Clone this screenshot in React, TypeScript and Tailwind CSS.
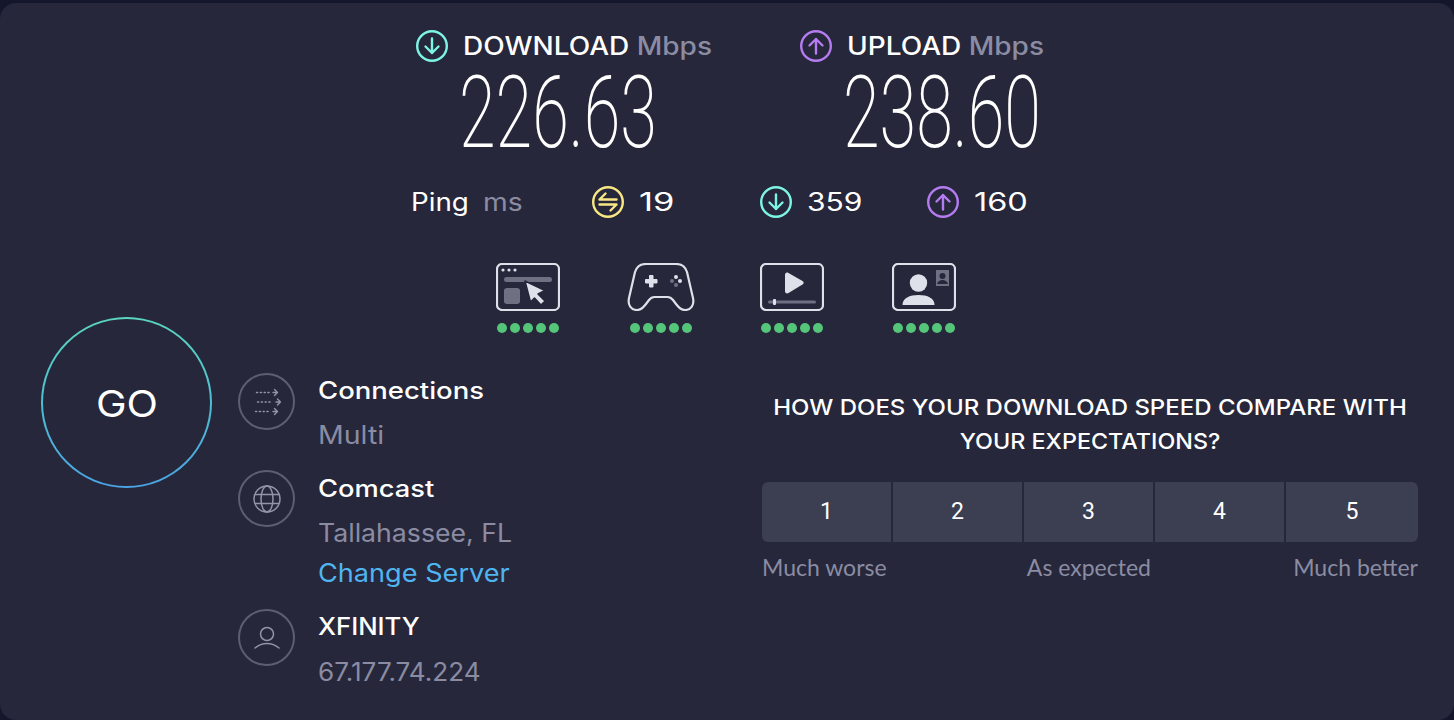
const sans = "font-['Inter','Noto_Sans',sans-serif]";

function ArrowIcon({ dir, color, size = 32 }: { dir: "down" | "up"; color: string; size?: number }) {
  return (
    <svg width={size} height={size} viewBox="0 0 32 32" fill="none" stroke={color} strokeWidth="2.400" strokeLinecap="round" strokeLinejoin="round" className="shrink-0">
      <circle cx="16" cy="16" r="14.800" />
      {dir === "down" ? <path d="M16 8.500v14.500M9.500 16.500l6.500 6.500 6.500-6.500" /> : <path d="M16 23.500V9M9.500 15.500L16 9l6.500 6.500" />}
    </svg>
  );
}

function PingIcon() {
  return (
    <svg width="32" height="32" viewBox="0 0 32 32" fill="none" stroke="#f9e784" strokeWidth="2.400" strokeLinecap="round" strokeLinejoin="round" className="shrink-0">
      <circle cx="16" cy="16" r="14.800" />
      <path d="M7.500 13.500h17M13.500 7.500l-6 6M7.500 18.500h17M18.500 24.500l6-6" />
    </svg>
  );
}

function BrowseIcon() {
  return (
    <svg width="64" height="48" viewBox="0 0 64 48" fill="none">
      <rect x="1" y="1" width="62" height="46" rx="5" stroke="#dfe1ea" strokeWidth="2.200" />
      <circle cx="7" cy="7" r="1.600" fill="#dfe1ea" />
      <circle cx="13" cy="7" r="1.600" fill="#dfe1ea" />
      <circle cx="19" cy="7" r="1.600" fill="#dfe1ea" />
      <rect x="8" y="14" width="48" height="5" rx="2.500" fill="#6f7183" />
      <rect x="8" y="25" width="16" height="16" rx="3" fill="#6f7183" />
      <path d="M29 18l20 9.500-7 3.500 7 7-4 4-6.500-7-4 4z" fill="#dfe1ea" stroke="#26273a" strokeWidth="1.500" strokeLinejoin="round" />
    </svg>
  );
}

function GameIcon() {
  return (
    <svg width="68" height="48" viewBox="0 0 68 48" fill="none">
      <path d="M19 1h30c6 0 9 2 11 8l6 26c1.500 7-2 12-8 12-4 0-6-2-9-6l-3-4c-1.500-2-3-3-5.500-3h-13c-2.500 0-4 1-5.500 3l-3 4c-3 4-5 6-9 6-6 0-9.500-5-8-12L8 9c2-6 5-8 11-8z" stroke="#dfe1ea" strokeWidth="2.200" />
      <path d="M22.500 12.500h3.500v4h4v3.500h-4v4h-3.500v-4h-4v-3.500h4z" fill="#dfe1ea" stroke="#dfe1ea" strokeLinejoin="round" />
      <circle cx="49" cy="14" r="2" fill="#dfe1ea" />
      <circle cx="45" cy="18" r="2" fill="#6f7183" />
      <circle cx="53" cy="18" r="2" fill="#dfe1ea" />
      <circle cx="49" cy="22" r="2" fill="#6f7183" />
    </svg>
  );
}

function VideoIcon() {
  return (
    <svg width="64" height="48" viewBox="0 0 64 48" fill="none">
      <rect x="1" y="1" width="62" height="46" rx="5" stroke="#dfe1ea" strokeWidth="2.200" />
      <path d="M25 12c0-2 1.500-3 3.500-2l14 8c1.500 1 1.500 2.500 0 3.500l-14 8.500c-2 1-3.500 0-3.500-2z" fill="#dfe1ea" />
      <rect x="8" y="37.500" width="48" height="3" rx="1.500" fill="#6f7183" />
      <rect x="13" y="36" width="3" height="6" rx="1" fill="#dfe1ea" />
    </svg>
  );
}

function CallIcon() {
  return (
    <svg width="64" height="48" viewBox="0 0 64 48" fill="none">
      <rect x="1" y="1" width="62" height="46" rx="5" stroke="#dfe1ea" strokeWidth="2.200" />
      <circle cx="26.500" cy="20" r="8.700" fill="#dfe1ea" />
      <path d="M10.500 42c0-7 7-10 16-10s16 3 16 10z" fill="#dfe1ea" />
      <rect x="44" y="7" width="13" height="16" fill="#6f7183" />
      <circle cx="50.500" cy="13" r="3" fill="#26273a" />
      <path d="M45 21c1-3 3-4 5.500-4s4.500 1 5.500 4z" fill="#26273a" />
    </svg>
  );
}

function Dots() {
  return (
    <div className="flex gap-[3px] mt-[12px] justify-center">
      <span className="w-[10px] h-[10px] rounded-full bg-[#55c57a]" />
      <span className="w-[10px] h-[10px] rounded-full bg-[#55c57a]" />
      <span className="w-[10px] h-[10px] rounded-full bg-[#55c57a]" />
      <span className="w-[10px] h-[10px] rounded-full bg-[#55c57a]" />
      <span className="w-[10px] h-[10px] rounded-full bg-[#55c57a]" />
    </div>
  );
}

function Speed({ icon, label, value, className }: { icon: React.ReactNode; label: string; value: string; className: string }) {
  return (
    <div className={className}>
      <div className="flex items-center gap-[15px] h-[32px]">
        {icon}
        <div className="text-[25px] font-medium text-white whitespace-nowrap origin-left scale-x-[1.12] mt-[1px]">
          {label} <span className="text-[#8b8ca3]">Mbps</span>
        </div>
      </div>
      <div className="ml-[43px] w-[194px] h-[100px] mt-[1px] font-['Roboto',sans-serif] font-extralight text-[100px] leading-[100px] text-white whitespace-nowrap origin-left scale-x-[0.665]">
        {value}
      </div>
    </div>
  );
}

function Metric({ icon, value, className, textClass }: { icon: React.ReactNode; value: string; className: string; textClass: string }) {
  return (
    <div className={`flex items-center gap-[15px] ${className}`}>
      {icon}
      <span className={`inline-block text-[25px] text-white leading-none origin-left mt-[1px] ${textClass}`}>{value}</span>
    </div>
  );
}

function CircleIcon({ children }: { children: React.ReactNode }) {
  return (
    <div className="w-[57px] h-[57px] rounded-full border-2 border-[#5d5e72] flex items-center justify-center shrink-0">
      {children}
    </div>
  );
}

export default function App() {
  return (
    <div className={`w-[1454px] h-[720px] bg-[#14162b] overflow-hidden pt-[3px] ${sans}`}>
      <div className="h-[717px] rounded-[16px] bg-[#26273a] flex flex-col">
        <div className="flex pt-[27px] pl-[416px]">
          <Speed className="w-[384px]" label="DOWNLOAD" value="226.63" icon={<ArrowIcon dir="down" color="#7df5e4" />} />
          <Speed className="w-[300px]" label="UPLOAD" value="238.60" icon={<ArrowIcon dir="up" color="#b57bf0" />} />
        </div>

        <div className="flex items-center h-[32px] mt-[23px] pl-[411px]">
          <span className="inline-block text-[25px] text-white w-[72px] origin-left scale-x-[1.11] mt-[1px]">Ping</span>
          <span className="inline-block text-[25px] text-[#8b8ca3] w-[109px] origin-left scale-x-[1.13] mt-[1px]">ms</span>
          <Metric className="w-[168px]" textClass="scale-x-[1.38]" icon={<PingIcon />} value="19" />
          <Metric className="w-[167px] gap-[13px]" textClass="scale-x-[1.2]" icon={<ArrowIcon dir="down" color="#7df5e4" />} value="359" />
          <Metric className="w-[120px]" textClass="scale-x-[1.3]" icon={<ArrowIcon dir="up" color="#b57bf0" />} value="160" />
        </div>

        <div className="flex items-start mt-[45px] pl-[496px]">
          <div className="w-[131px]"><div className="w-[64px]"><BrowseIcon /><Dots /></div></div>
          <div className="w-[133px]"><div className="w-[68px]"><GameIcon /><Dots /></div></div>
          <div className="w-[132px]"><div className="w-[64px]"><VideoIcon /><Dots /></div></div>
          <div className="w-[64px]"><CallIcon /><Dots /></div>
        </div>

        <div className="flex -mt-[16px] pl-[41px]">
          <div className="w-[171px] h-[171px] rounded-full p-[2px] bg-linear-to-b from-[#5ad6bd] to-[#4aa3e3] shrink-0">
            <div className="w-full h-full rounded-full bg-[#26273a] flex items-center justify-center pt-[2px]">
              <span className="inline-block text-[37px] text-white scale-x-[1.11]">GO</span>
            </div>
          </div>

          <div className="ml-[26px] w-[524px] pt-[56px] shrink-0">
            <div className="flex gap-[23px]">
              <CircleIcon>
                <svg width="28" height="28" viewBox="0 0 28 28" fill="none" stroke="#9394a8" strokeWidth="1.400" strokeLinecap="round" strokeLinejoin="round">
                  <path d="M3.500 4.500h15" strokeDasharray="1.200 2.600" />
                  <path d="M20 4.500h4.500M21.500 1.500l3 3-3 3" />
                  <path d="M4.500 14h15" strokeDasharray="1.200 2.600" />
                  <path d="M23 14h4.500M24.500 11l3 3-3 3" />
                  <path d="M2.500 23.500h15" strokeDasharray="1.200 2.600" />
                  <path d="M20 23.500h4.500M21.500 20.500l3 3-3 3" />
                </svg>
              </CircleIcon>
              <div className="mt-[2px]">
                <div className="text-[24px] font-medium text-white leading-[32px] origin-left scale-x-[1.145]">Connections</div>
                <div className="text-[25px] text-[#8b8ca3] leading-[32px] mt-[12px] origin-left scale-x-[1.14]">Multi</div>
              </div>
            </div>
            <div className="flex gap-[23px] mt-[19px]">
              <CircleIcon>
                <svg width="28" height="28" viewBox="0 0 28 28" fill="none" stroke="#9394a8" strokeWidth="1.500">
                  <circle cx="14" cy="14" r="13" />
                  <ellipse cx="14" cy="14" rx="6" ry="13" />
                  <path d="M2 9.500h24M2 18.500h24" />
                </svg>
              </CircleIcon>
              <div className="mt-[3px]">
                <div className="text-[24px] font-medium text-white leading-[32px] origin-left scale-x-[1.137]">Comcast</div>
                <div className="text-[25px] text-[#8b8ca3] leading-[32px] mt-[12px] origin-left scale-x-[1.066]">Tallahassee, FL</div>
                <div className="text-[25px] text-[#4fb4f0] leading-[32px] mt-[8px] origin-left scale-x-[1.085]">Change Server</div>
              </div>
            </div>
            <div className="flex gap-[23px] mt-[20px]">
              <CircleIcon>
                <svg width="26" height="24" viewBox="0 0 26 24" fill="none" stroke="#9394a8" strokeWidth="1.500" strokeLinecap="round">
                  <circle cx="13" cy="8" r="6.500" />
                  <path d="M1 22c3.500-3 7.500-4.500 12-4.500s8.500 1.500 12 4.500" />
                </svg>
              </CircleIcon>
              <div className="mt-[2px]">
                <div className="text-[24px] font-medium text-white leading-[32px] origin-left scale-x-[1.07]">XFINITY</div>
                <div className="text-[25px] text-[#8b8ca3] leading-[32px] mt-[13px] origin-left scale-x-[1.045]">67.177.74.224</div>
              </div>
            </div>
          </div>

          <div className="w-[656px] pt-[73px] shrink-0">
            <div className="text-[22px] font-medium text-white text-center leading-[34px] whitespace-nowrap">
              <div className="scale-x-[1.09]">HOW DOES YOUR DOWNLOAD SPEED COMPARE WITH</div>
              <div className="scale-x-[1.06]">YOUR EXPECTATIONS?</div>
            </div>
            <div className="flex gap-[2px] mt-[24px] h-[60px] rounded-[6px] overflow-hidden">
              {["1", "2", "3", "4", "5"].map((n) => (
                <div key={n} className="flex-1 last:min-w-[132px] bg-[#3c3e52] flex items-center justify-center text-[23px] text-white font-['Roboto',sans-serif]">
                  {n}
                </div>
              ))}
            </div>
            <div className="flex justify-between mt-[11px] font-['Lato',sans-serif] text-[23px] text-[#8b8ca3] leading-[28px]">
              <span>Much worse</span>
              <span className="-ml-[2px]">As expected</span>
              <span>Much better</span>
            </div>
          </div>
        </div>
      </div>
    </div>
  );
}
